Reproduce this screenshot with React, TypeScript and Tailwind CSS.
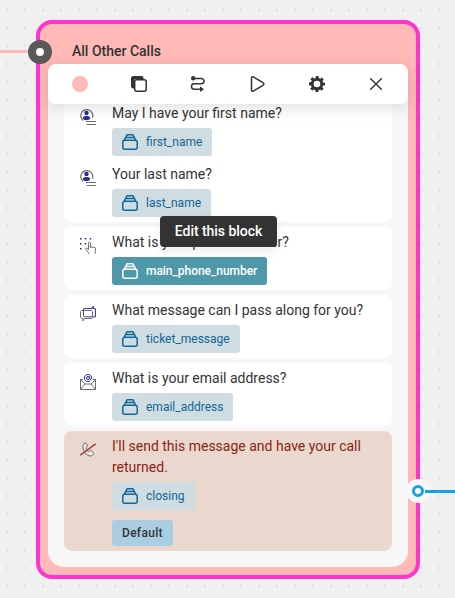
import React from 'react';
import clsx from 'clsx';

const StackIcon = () => (
  <svg className="w-4 h-4 shrink-0" viewBox="0 0 16 16" fill="none" stroke="currentColor" strokeWidth="1.5">
    <rect x="0.8" y="6.300" width="14.400" height="8.900" rx="2" />
    <path d="M2.300 6.300 3.600 3.600h8.800l1.300 2.700M3.900 3.600l.6-1.900c.2-.6.600-.9 1.200-.9h4.600c.6 0 1 .3 1.200.9l.6 1.900" />
  </svg>
);

const PersonIcon = () => (
  <svg className="w-4 h-4" viewBox="0 0 16 16" fill="none">
    <path d="M3.300 11.500A6 6 0 1 1 12.400 8.800" stroke="#6b6b6b" strokeWidth="1.200" />
    <circle cx="6.500" cy="4" r="2.200" fill="#28308c" />
    <path d="M2.800 9.500c0-1.700 1.200-2.600 2.600-2.600h2.200c1.400 0 2.600.9 2.600 2.600-1.300 2.200-6.100 2.200-7.400 0z" fill="#28308c" />
    <path d="M6 12.500h10M6.500 15.500H16" stroke="#6b6b6b" />
  </svg>
);

const KeypadIcon = () => (
  <svg className="w-4 h-4" viewBox="0 0 16 16" fill="none">
    <path
      d="M0 .8h1.500M4.800.8h1.500M9.700.8h1.500M0 5.700h1.500M4.800 5.700h1.500M0 10.700h1.500"
      stroke="#28308c"
      strokeWidth="1.500"
    />
    <path
      d="M9 16c-.2-1.900-3.300-3.900-3.300-5.200 0-1 1.300-.9 2.800.7V5.300c0-1.500 2-1.500 2 0v4.300c0-1.200 1.900-1.200 1.900.2 0-1.100 1.700-1 1.700.2 0-.8 1.400-.8 1.400.4 0 2.600-.5 3.500-.5 5.600"
      stroke="#6b6b6b"
    />
  </svg>
);

const MessageIcon = () => (
  <svg className="w-4 h-4" viewBox="0 0 16 16" fill="none">
    <path
      d="M3.500 4.500v-.8c0-.7.500-1.200 1.200-1.200h6.800L13.300.7v1.800h.8c.8 0 1.400.5 1.400 1.300v5.900c0 .8-.6 1.300-1.400 1.300h-1.600"
      stroke="#3a4196"
      strokeWidth="1.200"
    />
    <path
      d="M12.500 6v5c0 1-.6 1.500-1.500 1.500H4.500L2.900 15v-2.500H2c-1 0-1.500-.6-1.500-1.500V6c0-1 .6-1.500 1.500-1.500h9c.9 0 1.500.5 1.500 1.500z"
      stroke="#6b6b6b"
    />
    <path d="M3.500 4.500v5c0 .8.500 1.300 1.300 1.300h7.500" stroke="#3a4196" />
  </svg>
);

const EmailIcon = () => (
  <svg className="w-4 h-4" viewBox="0 0 16 16" fill="none">
    <path d="M3 5.500H.5v10h15v-10H13M.5 5.700 5 10h6l4.500-4.300M.7 15.300 5 10M15.300 15.300 11 10" stroke="#6b6b6b" />
    <circle cx="8" cy="4" r="1.500" stroke="#28308c" />
    <path
      d="M9.700 2.300v2.500c0 1.300 2 1.100 2-.8C11.700 1.900 10 .5 8 .5S4.300 1.900 4.300 4 6 7.500 8 7.500c.9 0 1.600-.2 2.200-.6"
      stroke="#28308c"
    />
  </svg>
);

const HangupIcon = () => (
  <svg className="w-4 h-4" viewBox="0 0 16 16" fill="none">
    <path
      d="M3.200 2.600c.7-1.900 3.100-1.900 3.800-.3.600 1.400.2 2.600-1 3.500-.1 1.600.9 3.200 2.400 3.800 1.300-1 2.500-1.100 3.700-.3 1.700 1.100 2 2.700.6 3.900-2 1.600-5.200.7-7.400-2.200C3.200 8.300 2.300 5 3.200 2.600z"
      fill="#f3e8e1"
      stroke="#6b6b6b"
    />
    <path d="M.3 13.200 15.700 1.800" stroke="#a03a30" strokeWidth="1.300" />
  </svg>
);

const CopyIcon = () => (
  <svg className="w-4 h-4" viewBox="0 0 16 16">
    <path d="M3 12.500h-.5a2.500 2.500 0 0 1-2.500-2.500V2.500A2.500 2.500 0 0 1 2.500 0h7.800a2.300 2.300 0 0 1 2.300 2.300V3H5a2 2 0 0 0-2 2z" fill="#333" />
    <rect x="3.700" y="3.700" width="11.500" height="11.500" rx="2" fill="#fff" stroke="#333" strokeWidth="1.500" />
  </svg>
);

const RouteIcon = () => (
  <svg className="w-4 h-4" viewBox="0 0 16 16" fill="none">
    <circle cx="3.200" cy="2.300" r="2.200" fill="#333" />
    <path d="M3 2.400h8.300a2.700 2.700 0 0 1 0 5.400H4.200a2.700 2.700 0 0 0 0 5.400h7.300" stroke="#333" strokeWidth="1.500" />
    <path d="M10 10.300v5.700l4-2.850z" fill="#333" />
  </svg>
);

const PlayIcon = () => (
  <svg className="w-4 h-4" viewBox="0 0 16 16" fill="none">
    <path
      d="M1.500 2c0-1 1-1.600 1.900-1.100l9.600 5.700c1.100.6 1.100 2.200 0 2.800l-9.600 5.700C2.500 15.600 1.500 15 1.500 14z"
      stroke="#333"
      strokeWidth="1.500"
    />
  </svg>
);

const GearIcon = () => (
  <svg className="w-4 h-4" viewBox="0 0 16 16" fill="none" stroke="#333">
    <circle cx="8" cy="8" r="4.800" strokeWidth="3" />
    <circle cx="8" cy="8" r="6.900" strokeWidth="2.200" strokeDasharray="3.100 2.319" strokeDashoffset="1.550" />
  </svg>
);

const CloseIcon = () => (
  <svg className="w-4 h-4" viewBox="0 0 16 16">
    <path d="m2.200 2.200 11.600 11.600M13.800 2.200 2.200 13.800" stroke="#333" strokeWidth="1.400" />
  </svg>
);

const Chip = ({ name, active = false }: { name: string; active?: boolean }) => (
  <div
    className={clsx(
      'mt-1 flex h-7 w-fit items-center gap-2 rounded-[3px] px-2.5 text-[12px]',
      active ? 'bg-[#4f98a9] font-medium tracking-[-0.04px] text-white' : 'bg-[#cfdce2] text-[#126796]',
    )}
  >
    <StackIcon />
    <span>{name}</span>
  </div>
);

const Step = ({ icon, text, children }: { icon: React.ReactNode; text: string; children: React.ReactNode }) => (
  <div className="flex">
    <div className="w-8 shrink-0 pt-[6px]">{icon}</div>
    <div className="min-w-0 flex-1">
      <p className="text-[14px] leading-[21px]">{text}</p>
      {children}
    </div>
  </div>
);

const card = 'rounded-lg py-[5px] px-4';

export default function App() {
  return (
    <div className="relative h-[598px] w-[455px] overflow-hidden bg-[#f0f0f0] font-['Roboto',sans-serif] text-[#333]">
      {/* canvas grid */}
      <svg className="absolute inset-0 h-full w-full">
        <defs>
          <pattern id="dots" width="18" height="18" patternUnits="userSpaceOnUse">
            <rect x="6" y="9" width="2" height="2" fill="#dedede" />
          </pattern>
        </defs>
        <rect width="100%" height="100%" fill="url(#dots)" />
      </svg>

      <div className="absolute left-0 top-[50px] h-[3px] w-9 bg-[#ffb9b6]" />

      <div className="absolute left-9 top-5 w-96 rounded-2xl border-4 border-[#ff33d0] bg-[#ffb9b6] px-2 pb-2">
        <h2 className="h-[58px] pl-6 pt-4 text-[14px] font-medium leading-[22px]">All Other Calls</h2>
        <div className="flex flex-col gap-[5px] rounded-2xl bg-[#f7f7f7] p-4">
          <div className={clsx(card, 'flex flex-col gap-2 bg-white')}>
            <Step icon={<PersonIcon />} text="May I have your first name?">
              <Chip name="first_name" />
            </Step>
            <Step icon={<PersonIcon />} text="Your last name?">
              <Chip name="last_name" />
            </Step>
          </div>
          <div className={clsx(card, 'bg-white')}>
            <Step icon={<KeypadIcon />} text="What is your phone number?">
              <Chip name="main_phone_number" active />
            </Step>
          </div>
          <div className={clsx(card, 'bg-white')}>
            <Step icon={<MessageIcon />} text="What message can I pass along for you?">
              <Chip name="ticket_message" />
            </Step>
          </div>
          <div className={clsx(card, 'bg-white')}>
            <Step icon={<EmailIcon />} text="What is your email address?">
              <Chip name="email_address" />
            </Step>
          </div>
          <div className={clsx(card, 'bg-[#ead8ce] text-[#8b1f14]')}>
            <Step icon={<HangupIcon />} text="I'll send this message and have your call returned.">
              <Chip name="closing" />
              <div className="mt-2.5 flex h-[26px] w-fit items-center rounded-[3px] bg-[#a9cee2] px-2.5 text-[12px] font-medium tracking-[0.3px] text-[#333]">
                Default
              </div>
            </Step>
          </div>
        </div>
      </div>

      {/* block toolbar */}
      <div className="absolute left-12 top-16 flex h-10 w-[360px] items-center justify-between rounded-lg bg-white px-6 shadow-[0_4px_16px_rgba(0,0,0,0.12)]">
        <span className="h-4 w-4 rounded-full bg-[#ffb9b6]" />
        <CopyIcon />
        <RouteIcon />
        <PlayIcon />
        <GearIcon />
        <CloseIcon />
      </div>

      <div className="absolute left-40 top-[216px] flex h-[31px] w-[117px] items-center justify-center rounded-[4px] bg-[#333] text-[14px] font-medium tracking-[-0.05px] text-white shadow-[0_4px_12px_rgba(0,0,0,0.08)]">
        Edit this block
      </div>

      {/* connectors */}
      <div className="absolute left-7 top-10 flex h-6 w-6 items-center justify-center rounded-full bg-[#595959]">
        <span className="h-2 w-2 rounded-full bg-[#f7f7f7]" />
      </div>
      <div className="absolute left-[406px] top-[479px] flex h-6 w-6 items-center justify-center rounded-full bg-[#f7f7f7]">
        <span className="h-3 w-3 rounded-full border-[3px] border-[#1b9fe4] bg-white" />
      </div>
      <div className="absolute left-[425px] top-[490px] h-[3px] w-[30px] bg-[#1b9fe4]" />
    </div>
  );
}
